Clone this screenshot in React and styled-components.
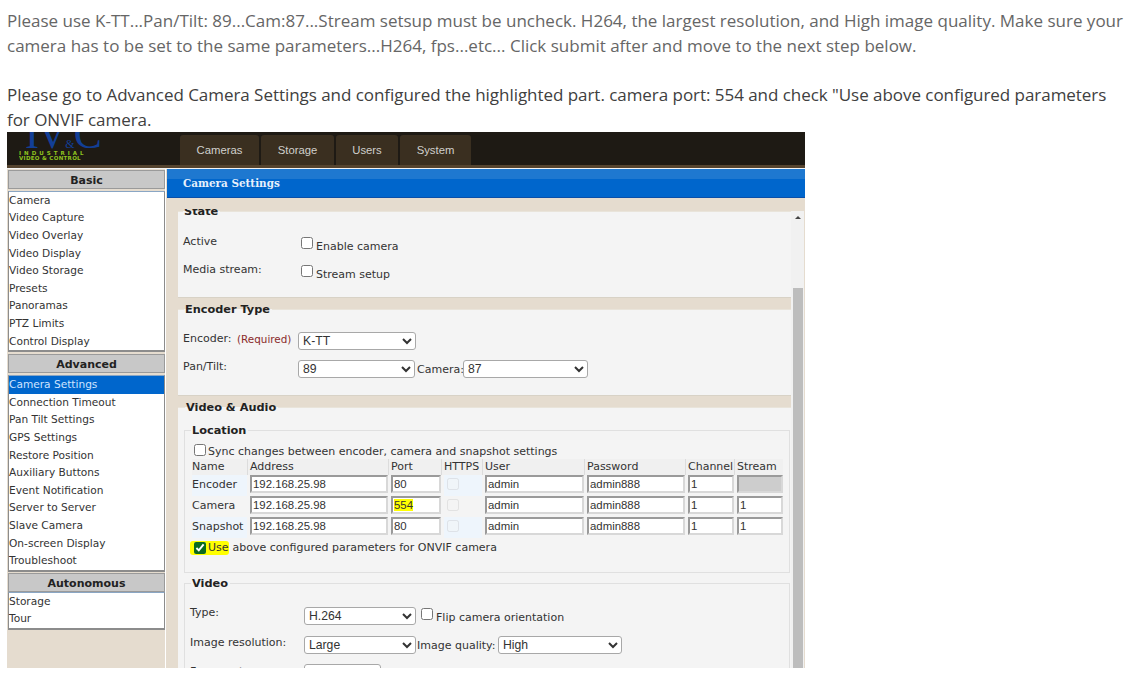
import React from 'react';
import styled, { createGlobalStyle } from 'styled-components';

const GlobalStyle = createGlobalStyle`
  html, body { margin: 0; padding: 0; background: #fff; }
  body { font-family: "DejaVu Sans", sans-serif; }
`;

const Page = styled.div`
  width: 1131px;
  height: 692px;
  overflow: hidden;
  padding: 9px 0 0 7px;
  box-sizing: border-box;
`;

const Note = styled.p`
  margin: 0 0 25px;
  font: 17px/24.7px "Open Sans", sans-serif;
  letter-spacing: ${p => p.$dark ? '-0.045px' : '0'};
  color: ${p => p.$dark ? '#404040' : '#666'};
  white-space: nowrap;
`;

const Frame = styled.div`
  width: 798px;
  height: 536px;
  margin-top: -26px;
  overflow: hidden;
  display: flex;
  flex-direction: column;
  background: #e5dccf;
`;

const TopBar = styled.header`
  height: 33px;
  flex: none;
  background: #1e1a14;
  border-bottom: 3px solid #55442f;
  display: flex;
  align-items: flex-end;
  padding-left: 12px;
`;

const Logo = styled.div`
  width: 161px;
  height: 33px;
  overflow: hidden;
  flex: none;
  color: #8fc31f;
`;

const LogoMark = styled.div`
  font: 42px/26px "Liberation Serif", serif;
  color: #123f96;
  margin-top: -11px;
  height: 30px;
  padding-left: 6px;
  letter-spacing: -2px;
  white-space: nowrap;
  small { font-size: 12px; letter-spacing: -1px; }
`;

const LogoLine = styled.div`
  font: bold 5.5px/5px "DejaVu Sans", sans-serif;
  letter-spacing: ${p => p.$wide ? '3px' : '0.3px'};
  white-space: nowrap;
`;

const Tabs = styled.nav`
  display: flex;
  gap: 2px;
  align-self: flex-end;
`;

const Tab = styled.div`
  height: 30px;
  width: ${p => p.$w}px;
  background: #3a2f20;
  border-radius: 3px 3px 0 0;
  color: #d0d0cc;
  font: 11.3px/30px "Liberation Sans", sans-serif;
  text-align: center;
`;

const Body = styled.div`
  flex: 1;
  min-height: 0;
  display: flex;
  border-top: 1px solid #f4f4f4;
`;

const Side = styled.aside`
  width: 159px;
  flex: none;
  padding-left: 1px;
  box-sizing: border-box;
  border-right: 1px solid #fff;
  margin-right: 1px;
`;

const SideHead = styled.div`
  height: 17px;
  margin-top: ${p => p.$gap}px;
  background: #c8c8c8;
  border: 1px solid #9a9a9a;
  font: bold 11px/20px "DejaVu Sans", sans-serif;
  color: #222;
  text-align: center;
`;

const SideList = styled.ul`
  list-style: none;
  margin: ${p => p.$tight ? 0 : 2}px 0 0;
  padding: 0;
  background: #fff;
  border: 1px solid #8c8c8c;
  border-top-color: #8aa6c4;
  border-bottom-width: 2px;
`;

const SideItem = styled.li`
  height: 17.6px;
  font: 10.6px/17px "DejaVu Sans", sans-serif;
  white-space: nowrap;
  color: ${p => p.$on ? '#cfe3ff' : '#333'};
  background: ${p => p.$on ? '#0066cc' : 'transparent'};
`;

const Main = styled.main`
  flex: 1;
  min-width: 0;
  display: flex;
  flex-direction: column;
`;

const TitleBar = styled.div`
  height: 28px;
  flex: none;
  background: linear-gradient(#1e78d0 0 10px, #0066cc 10px);
  border-bottom: 1px solid #0a4fa8;
  color: #e6f0fb;
  font: bold 10.4px/28px "DejaVu Serif", serif;
  padding-left: 16px;
`;

const Scroller = styled.div`
  flex: 1;
  min-height: 0;
  display: flex;
  margin-top: 11px;
  overflow: hidden;
`;

const Sheet = styled.div`
  width: 613px;
  margin-left: 11px;
  flex: none;
`;

const Panel = styled.fieldset`
  margin: 0 0 5px;
  margin-top: ${p => p.$clip ? '-4px' : '0'};
  padding: ${p => p.$pad || '0 5px'};
  border: 0;
  border-top: 1px solid #e9e4da;
  border-bottom: 1px solid #d8d2c6;
  background: #f4f4f4;
  min-width: 0;
  height: ${p => p.$h}px;
  box-sizing: border-box;
`;

const Legend = styled.legend`
  font: bold 11.3px/14px "DejaVu Sans", sans-serif;
  color: #222;
  padding: 0 2px 0 1px;
  margin-left: ${p => p.$ml || 0}px;
`;

const Inner = styled.fieldset`
  margin: ${p => p.$m || '0'};
  padding: ${p => p.$pad || '0'};
  border: 1px solid #e0e0e0;
  background: #f4f4f4;
  min-width: 0;
  height: ${p => p.$h}px;
  box-sizing: border-box;
`;

const Text = styled.span`
  font: ${p => p.$red ? '10.4px' : '11px'}/14px "DejaVu Sans", sans-serif;
  color: ${p => p.$red ? '#8a2b2b' : '#333'};
  white-space: nowrap;
`;

const StateGrid = styled.div`
  display: grid;
  grid-template-columns: 118px auto;
  grid-auto-rows: 28px;
  padding-top: 16px;
  align-items: start;
`;

const CheckRow = styled.label`
  display: flex;
  align-items: flex-start;
  gap: 3px;
  margin-left: ${p => p.$ml || 0}px;
  ${Text} { padding-top: ${p => p.$drop || 0}px; }
`;

const Box = styled.input.attrs({ type: 'checkbox', readOnly: true })`
  width: 12px;
  height: 12px;
  margin: ${p => p.$top || 0}px 0 0;
  flex: none;
  accent-color: #0b6a1e;
`;

const FormRow = styled.div`
  display: flex;
  align-items: flex-start;
  height: ${p => p.$h || 28}px;
  margin-top: ${p => p.$mt || 0}px;
`;

const Label = styled(Text)`
  display: block;
  box-sizing: border-box;
  width: ${p => p.$w ? p.$w + 'px' : 'auto'};
  flex: none;
  padding-top: ${p => p.$top || 0}px;
  padding-left: ${p => p.$left || 0}px;
`;

const Select = styled.select`
  width: ${p => p.$w}px;
  height: 18px;
  margin: ${p => p.$m || '0'};
  padding: 0;
  flex: none;
  background: #fff;
  border: 1px solid #a8a8a8;
  border-radius: 3px;
  color: #333;
  font: 12.2px "Liberation Sans", sans-serif;
`;

const SyncRow = styled.div`
  padding: 6px 0 0 9px;
  height: 14px;
  display: flex;
  gap: 2px;
  ${Text} { padding-top: 1px; }
`;

const Table = styled.div`
  display: grid;
  grid-template-columns: 55px 138px 50px 38px 99px 98px 46px 46px;
  column-gap: 3px;
  margin: 1px 0 0 7px;
`;

const HeadCell = styled.div`
  height: 16px;
  font: 11px/15px "DejaVu Sans", sans-serif;
  color: #333;
  background: #f0f0f0;
  white-space: nowrap;
  margin-left: ${p => p.$first ? 0 : -3}px;
  padding-left: ${p => p.$first ? 0 : 2}px;
  border-left: ${p => p.$first ? 'none' : '1px solid #dcdcdc'};
`;

const RowCell = styled.div`
  height: 21px;
  padding-top: 1px;
  box-sizing: border-box;
  background: ${p => p.$tint ? '#eef5fc' : 'transparent'};
  font: 11px/17px "DejaVu Sans", sans-serif;
  color: #333;
  white-space: nowrap;
  display: flex;
  padding-left: ${p => p.$center ? 3 : 0}px;
`;

const Field = styled.div`
  width: 100%;
  height: 18px;
  box-sizing: border-box;
  margin-top: -1px;
  border: 2px solid #d8d8d8;
  border-top-color: #9a9a9a;
  border-left-color: #9a9a9a;
  background: ${p => p.$off ? '#cdcdcd' : '#fff'};
  font: 11.4px/15px "Liberation Sans", sans-serif;
  color: #333;
  padding-left: 1px;
  white-space: nowrap;
  overflow: hidden;
`;

const Mark = styled.mark`
  background: #ffff00;
  color: inherit;
`;

const TinyBox = styled(Box)`
  opacity: 0.45;
  margin-top: 2px;
`;

const OnvifRow = styled.div`
  margin: 3px 0 0 5px;
  display: flex;
  align-items: center;
  height: 14px;
`;

const Hilite = styled.span`
  display: flex;
  align-items: center;
  gap: 2px;
  background: #ffff00;
  border-radius: 3px;
  padding: 0 0 0 4px;
  margin-right: 4px;
  height: 14px;
  font: 11px/14px "DejaVu Sans", sans-serif;
  color: #333;
`;

const ScrollTrack = styled.div`
  width: 13px;
  margin-top: 2px;
  flex: none;
  background: #f1f1f1;
  display: flex;
  flex-direction: column;
  align-items: center;
`;

const ScrollArrow = styled.div`
  margin-top: 5px;
  width: 0;
  height: 0;
  border: 3px solid transparent;
  border-top: 0;
  border-bottom: 3px solid #444;
`;

const ScrollThumb = styled.div`
  width: 10px;
  flex: 1;
  margin-top: 69px;
  background: #bdbdbd;
`;

const basic = ['Camera', 'Video Capture', 'Video Overlay', 'Video Display', 'Video Storage', 'Presets', 'Panoramas', 'PTZ Limits', 'Control Display'];
const advanced = ['Camera Settings', 'Connection Timeout', 'Pan Tilt Settings', 'GPS Settings', 'Restore Position', 'Auxiliary Buttons', 'Event Notification', 'Server to Server', 'Slave Camera', 'On-screen Display', 'Troubleshoot'];
const autonomous = ['Storage', 'Tour'];

const columns = ['Name', 'Address', 'Port', 'HTTPS', 'User', 'Password', 'Channel', 'Stream'];
const rows = [
  { name: 'Encoder', port: '80', stream: '', tint: true },
  { name: 'Camera', port: '554', stream: '1' },
  { name: 'Snapshot', port: '80', stream: '1', tint: true },
];

function Menu({ title, items, gap, tight }) {
  return (
    <>
      <SideHead $gap={gap}>{title}</SideHead>
      <SideList $tight={tight}>
        {items.map(item => <SideItem key={item} $on={item === 'Camera Settings'}>{item}</SideItem>)}
      </SideList>
    </>
  );
}

export default function App() {
  return (
    <Page>
      <GlobalStyle />
      <Note>
        Please use K-TT...Pan/Tilt: 89...Cam:87...Stream setsup must be uncheck. H264, the largest resolution, and High image quality. Make sure your<br />
        camera has to be set to the same parameters...H264, fps...etc... Click submit after and move to the next step below.
      </Note>
      <Note $dark>
        Please go to Advanced Camera Settings and configured the highlighted part. camera port: 554 and check "Use above configured parameters<br />
        for ONVIF camera.
      </Note>
      <Frame>
        <TopBar>
          <Logo>
            <LogoMark>IV<small>&amp;</small>C</LogoMark>
            <LogoLine $wide>INDUSTRIAL</LogoLine>
            <LogoLine>VIDEO &amp; CONTROL</LogoLine>
          </Logo>
          <Tabs>
            <Tab $w={79}>Cameras</Tab>
            <Tab $w={73}>Storage</Tab>
            <Tab $w={62}>Users</Tab>
            <Tab $w={71}>System</Tab>
          </Tabs>
        </TopBar>
        <Body>
          <Side>
            <Menu title="Basic" items={basic} gap={1} />
            <Menu title="Advanced" items={advanced} gap={2} />
            <Menu title="Autonomous" items={autonomous} gap={1} tight />
          </Side>
          <Main>
            <TitleBar>Camera Settings</TitleBar>
            <Scroller>
              <Sheet>
                <Panel $clip $h={93}>
                  <Legend>State</Legend>
                  <StateGrid>
                    <Text>Active</Text>
                    <CheckRow $drop={5}><Box $top={2} /><Text>Enable camera</Text></CheckRow>
                    <Text>Media stream:</Text>
                    <CheckRow $drop={5}><Box $top={2} /><Text>Stream setup</Text></CheckRow>
                  </StateGrid>
                </Panel>
                <Panel $h={93}>
                  <Legend $ml={1}>Encoder Type</Legend>
                  <FormRow $mt={15}>
                    <Label $w={54}>Encoder:</Label>
                    <Label $w={60} $red>(Required)</Label>
                    <Select $w={118} $m="0 0 0 1px"><option>K-TT</option></Select>
                  </FormRow>
                  <FormRow>
                    <Label $w={115}>Pan/Tilt:</Label>
                    <Select $w={117}><option>89</option></Select>
                    <Label $w={48} $top={3} $left={2}>Camera:</Label>
                    <Select $w={125}><option>87</option></Select>
                  </FormRow>
                </Panel>
                <Panel $h={300} $pad="0 1px 0 6px">
                  <Legend $ml={1}>Video &amp; Audio</Legend>
                  <Inner $h={149} $m="9px 0 0 0">
                    <Legend $ml={6}>Location</Legend>
                    <SyncRow>
                      <Box /><Text>Sync changes between encoder, camera and snapshot settings</Text>
                    </SyncRow>
                    <Table>
                      {columns.map((c, i) => <HeadCell key={c} $first={i === 0}>{c}</HeadCell>)}
                      {rows.map(r => (
                        <React.Fragment key={r.name}>
                          <RowCell $tint={r.tint}>{r.name}</RowCell>
                          <RowCell><Field>192.168.25.98</Field></RowCell>
                          <RowCell><Field>{r.port === '554' ? <Mark>554</Mark> : r.port}</Field></RowCell>
                          <RowCell $tint={r.tint} $center><TinyBox disabled /></RowCell>
                          <RowCell><Field>admin</Field></RowCell>
                          <RowCell><Field>admin888</Field></RowCell>
                          <RowCell><Field>1</Field></RowCell>
                          <RowCell><Field $off={!r.stream}>{r.stream}</Field></RowCell>
                        </React.Fragment>
                      ))}
                    </Table>
                    <OnvifRow>
                      <Hilite><Box checked readOnly />Use</Hilite>
                      <Text>above configured parameters for ONVIF camera</Text>
                    </OnvifRow>
                  </Inner>
                  <Inner $h={120} $m="4px 0 0 0" $pad="0 0 0 5px">
                    <Legend $ml={1}>Video</Legend>
                    <FormRow $h={29} $mt={15}>
                      <Label $w={114}>Type:</Label>
                      <Select $w={112} $m="1px 0 0"><option>H.264</option></Select>
                      <CheckRow $drop={5} $ml={5}><Box $top={2} /><Text>Flip camera orientation</Text></CheckRow>
                    </FormRow>
                    <FormRow $h={29}>
                      <Label $w={114} $top={1}>Image resolution:</Label>
                      <Select $w={112} $m="1px 0 0"><option>Large</option></Select>
                      <Label $w={82} $top={4} $left={1}>Image quality:</Label>
                      <Select $w={124} $m="1px 0 0"><option>High</option></Select>
                    </FormRow>
                    <FormRow>
                      <Label $w={114} $top={1}>Frame rate:</Label>
                      <Select $w={77}><option>30</option></Select>
                    </FormRow>
                  </Inner>
                </Panel>
              </Sheet>
              <ScrollTrack>
                <ScrollArrow />
                <ScrollThumb />
              </ScrollTrack>
            </Scroller>
          </Main>
        </Body>
      </Frame>
    </Page>
  );
}
